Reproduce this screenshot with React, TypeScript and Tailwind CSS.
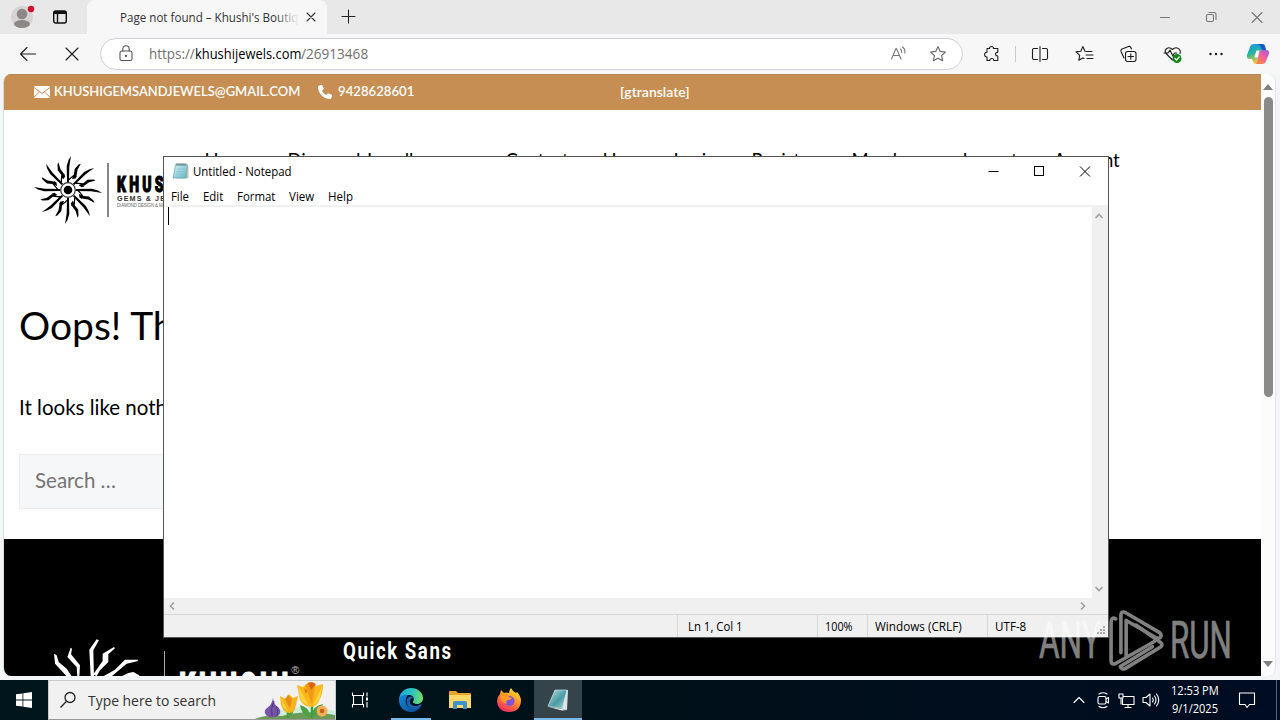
import { useLayoutEffect, useRef, useState, type ReactNode } from "react";

const SEGOE = "font-['Open_Sans','Noto_Sans',sans-serif]";
const LATO = "font-['Lato','Open_Sans',sans-serif]";

/** Single-line text squeezed or stretched horizontally to a given width. */
function Fit({ w, className = "", children }: { w: number; className?: string; children: ReactNode }) {
  const ref = useRef<HTMLSpanElement>(null);
  const [scale, setScale] = useState(1);
  useLayoutEffect(() => {
    if (ref.current) setScale(w / ref.current.offsetWidth);
  }, [w]);
  return (
    <span className="flex shrink-0 whitespace-nowrap" style={{ width: w }}>
      <span ref={ref} className={`shrink-0 origin-left ${className}`} style={{ transform: `scaleX(${scale})` }}>
        {children}
      </span>
    </span>
  );
}

function Icon({ children, className = "size-5", box = "0 0 20 20" }: { children: ReactNode; className?: string; box?: string }) {
  return (
    <svg viewBox={box} className={`shrink-0 ${className}`} fill="none" stroke="currentColor" strokeWidth="1.1" strokeLinecap="round" strokeLinejoin="round">
      {children}
    </svg>
  );
}

function TabBar() {
  return (
    <div className="flex h-[34px] bg-[#e8e8e8]">
      <div className="flex w-[87px] items-center rounded-br-lg pl-[10px]">
        <svg viewBox="0 0 26 26" className="size-[26px]">
          <circle cx="12" cy="13" r="11" fill="#d6d4d2" />
          <circle cx="12" cy="10" r="5.3" fill="#8b8885" />
          <ellipse cx="12" cy="20" rx="8" ry="4" fill="#8b8885" />
          <circle cx="21" cy="5" r="3.2" fill="#d00f2c" />
        </svg>
        <svg viewBox="0 0 16 16" className="ml-4 size-4" fill="none" stroke="#111" strokeWidth="1.4">
          <rect x="1.7" y="2" width="12.6" height="12" rx="2" />
          <path d="M2 3.500h12" strokeWidth="3" />
          <path d="M5.500 4v10" />
        </svg>
      </div>
      <div className="flex w-[240px] items-center rounded-t-lg bg-[#f7f7f7] pl-[33px]">
        <div className="relative mt-px w-[179px] overflow-hidden text-[#333]">
          <Fit w={178} className={`${SEGOE} text-[12px] leading-[18px]`}>Page not found – Khushi's Boutiq</Fit>
          <div className="absolute inset-y-0 right-0 w-6 bg-linear-to-r from-transparent to-[#f7f7f7]" />
        </div>
        <Icon className="ml-[5px] size-[14px]" box="0 0 14 14"><path d="M3 3l8 8M11 3l-8 8" stroke="#333" /></Icon>
      </div>
      <Icon className="mt-[8px] ml-[13px] size-4 text-[#222]" box="0 0 16 16"><path d="M8.500 2v13M2 8.500h13" /></Icon>
      <div className="ml-auto flex items-center gap-[30px] pr-[15px] text-[#777]">
        <Icon className="size-4" box="0 0 16 16"><path d="M3.500 8.500h9" /></Icon>
        <Icon className="size-4" box="0 0 16 16"><rect x="3.500" y="5.500" width="7" height="7" rx="1.500" /><path d="M6 3.500h5q2 0 2 2v5" /></Icon>
        <Icon className="size-4" box="0 0 16 16"><path d="M3 3.500l10 10M13 3.500l-10 10" /></Icon>
      </div>
    </div>
  );
}

const STAR = "M10 2.600l2.200 4.800 5.200.6-3.800 3.600 1 5.200L10 14.200l-4.600 2.600 1-5.200L2.600 8l5.200-.6z";

function Toolbar() {
  return (
    <div className="flex h-10 items-center bg-[#f7f7f7] text-[#1c1c1c]">
      <Icon className="ml-[18px] size-5"><path d="M17.500 10h-15M9 3.500L2.500 10 9 16.500" /></Icon>
      <Icon className="ml-6 size-5"><path d="M4 4l12 12M16 4L4 16" /></Icon>
      <div className="ml-[18px] flex h-8 w-[863px] items-center rounded-full border border-[#cfcfdc] bg-white pl-[15px]">
        <Icon className="size-5 text-[#555]">
          <rect x="4" y="7" width="12" height="9.500" rx="1.800" />
          <path d="M6.800 7V5a3.200 3.200 0 016.400 0v2" />
          <circle cx="10" cy="12" r=".6" fill="currentColor" />
        </Icon>
        <div className={`ml-[13px] flex text-[14px] leading-5 text-[#707070] ${SEGOE}`}>
          <Fit w={46}>https://</Fit>
          <Fit w={106} className="text-black">khushijewels.com</Fit>
          <Fit w={67}>/26913468</Fit>
        </div>
        <Icon className="ml-[520px] size-5 text-[#777]">
          <path d="M3.500 15L8 4.500h.4L13 15M5 11.500h6.500M12.500 5q1.600 1.200 1.200 3.600M14.500 3q3 2.300 2.300 6" />
        </Icon>
        <Icon className="ml-5 size-5 text-[#666]"><path d={STAR} /></Icon>
      </div>
      <Icon className="ml-[19px] size-5">
        <path d="M7.500 4.500a2 2 0 014 0h4.300V8a.5.500 0 01-.6.400 1.700 1.700 0 100 3.400.5.500 0 01.6.400v4.300h-4a2 2 0 00-4 0H5V13a2.400 2.400 0 110-4.800V4.500z" />
      </Icon>
      <div className="ml-[13px] h-4 w-px bg-[#ccc]" />
      <Icon className="ml-[15px] size-[18px]" box="0 0 18 18"><path d="M6.500 3.500H3q-1.500 0-1.500 1.500v8q0 1.500 1.500 1.500h3.500M11.500 3.500H15q1.500 0 1.500 1.500v8q0 1.500-1.500 1.500h-3.500M9 1.500v15" /></Icon>
      <Icon className="ml-[26px] size-5"><path d="M13 7.500l-3-.3-2.200-4.600-2 4.600-4.800.7 3.700 3.400-.9 5 4.200-2.400 1 .5M13 7.500h4M11 11h7M12 14.500h6" /></Icon>
      <Icon className="ml-6 size-5"><rect x="6.500" y="7.500" width="10.500" height="10" rx="2.200" /><path d="M11.800 9.800v5.400M9 12.500h5.500M5 14L2 7.500q-.6-1.800 1-2.500L9.500 2.500q1.600-.5 2.300 1l.7 1.500" /></Icon>
      <Icon className="ml-6 size-5">
        <path d="M9.500 16L3 9.500C.500 5.500 5.500 1.500 9.500 5.500c4-4 9 0 7.500 4M1 9h4l2-3 2.800 6 1.700-3h2" />
        <circle cx="14" cy="14.500" r="4.500" fill="#10861a" stroke="none" />
        <path d="M12 14.500l1.500 1.500 2.700-3" stroke="#fff" strokeWidth="1.300" />
      </Icon>
      <Icon className="ml-[23px] size-5"><path d="M4.500 10h.01M10 10h.01M15.500 10h.01" strokeWidth="2.400" /></Icon>
      <svg viewBox="0 0 24 22" className="ml-[20px] h-[22px] w-6">
        <defs>
          <linearGradient id="cpA" x1="0" y1="0" x2="0.300" y2="1"><stop stopColor="#1a8fec" /><stop offset=".5" stopColor="#26b6a0" /><stop offset="1" stopColor="#f5c72a" /></linearGradient>
          <linearGradient id="cpB" x1="1" y1="0" x2="0.200" y2="1"><stop stopColor="#a05be8" /><stop offset=".5" stopColor="#f0609a" /><stop offset="1" stopColor="#ff8a3c" /></linearGradient>
        </defs>
        <path d="M8 1h8q2.500 0 3.200 3L20 7h-4q-2 0-2.700 2.500L11 18q-.8 2.500-3 2.500L6 16H4q-4 0-3-4L4 4q1-3 4-3z" fill="url(#cpA)" />
        <path d="M11 1h5q2.500 0 3.200 3L20 7h-4l-1.500-3.500Q14 1.500 11 1z" fill="#1657d0" />
        <path d="M16 21H8q2.200 0 3-2.500L13.300 9.500Q14 7 16 7h4q4 0 3 4l-3 7q-1 3-4 3z" fill="url(#cpB)" />
        <path d="M10.500 7.500h3l-1.800 7H9q-.8 0-.5-1z" fill="#fff" />
      </svg>
    </div>
  );
}

const ANGLES = [0, 45, 90, 135, 180, 225, 270, 315];

function SunLogo() {
  return (
    <svg viewBox="-35 -35 70 70" className="size-[70px] shrink-0">
      {ANGLES.map((a) => (
        <g key={a} transform={`rotate(${a})`}>
          <path d="M-1-8l-.3-16L.500-30 3-34 2-28l-.7 5-.3 15z" />
          <path d="M.500-11L6-15.500l.6-5.500 4-4.500 2.200-.8-3.300 6L8.500-14 4.500-13 1-9.500z" />
          <path d="M5-14l4 0-1.500 2.500L4-11z" />
        </g>
      ))}
      <circle r="7.300" fill="#fff" stroke="#333" strokeWidth="1.200" />
      <circle r="4.300" />
    </svg>
  );
}

const NAV: [string, string][] = [
  ["Home", "w-[83px]"],
  ["Diamond Jewellery", "w-[218px]"],
  ["Contact", "w-[97px]"],
  ["Home", "w-[71px]"],
  ["Login", "w-[78px]"],
  ["Register", "w-[100px]"],
  ["Members", "w-[111px]"],
  ["Logout", "w-[91px]"],
  ["Account", "w-[80px]"],
];

function WebPage() {
  return (
    <div className="flex h-[606px] bg-[#f4f5f6] pb-1 pl-[3px]">
      <div className={`flex w-[1258px] flex-col overflow-hidden rounded-l-lg border-l border-[#dadada] bg-white text-black ${LATO}`}>
        <div className="flex h-9 shrink-0 items-center border-t border-[#b48a5c] bg-[#c68e52] pb-px pl-[30px] text-[13px] font-semibold text-white">
          <svg viewBox="0 0 16 12" className="h-3 w-4"><rect width="16" height="12" rx="1" fill="#fff" /><path d="M0 1.500l8 6 8-6M0 11l5.500-5M16 11l-5.500-5" fill="none" stroke="#c68e52" /></svg>
          <div className="ml-1"><Fit w={246}>KHUSHIGEMSANDJEWELS@GMAIL.COM</Fit></div>
          <svg viewBox="0 0 512 512" className="ml-[17.500px] size-[14px]" fill="#fff"><path d="M164.900 24.600c-7.700-18.600-28-28.500-47.400-23.200l-88 24C12.100 30.200 0 46 0 64c0 247.400 200.600 448 448 448 18 0 33.800-12.100 38.600-29.500l24-88c5.300-19.400-4.600-39.700-23.200-47.400l-96-40c-16.300-6.800-35.200-2.100-46.300 11.600L304.700 368C234.300 334.700 177.300 277.700 144 207.300l49.300-40.300c13.700-11.200 18.400-30 11.600-46.300l-40-96z" /></svg>
          <div className="ml-[6.500px]"><Fit w={76}>9428628601</Fit></div>
          <div className="mt-0.5 ml-[206px]"><Fit w={70}>[gtranslate]</Fit></div>
        </div>
        <div className="flex h-[160px] shrink-0">
          <div className="flex w-[200.500px] items-center pl-[29px]">
            <SunLogo />
            <div className="ml-1 h-[54px] w-[1.500px] bg-[#888]" />
            <div className="ml-[8px] flex w-[70px] flex-col pt-1">
              <Fit w={70} className="text-[22px] leading-[18px] font-black tracking-[5px] [-webkit-text-stroke:1.2px_black] font-['Roboto']">KHUSHI</Fit>
              <Fit w={74} className="mt-[2px] text-[6.500px] leading-[6px] font-bold tracking-[1px] font-['Liberation_Sans'] text-[#333]">GEMS &amp; JEWELS</Fit>
              <Fit w={74} className="text-[5px] leading-[6px] tracking-tight font-['Liberation_Sans'] text-[#666]">DIAMOND DESIGN &amp; MANUFACTURE</Fit>
            </div>
          </div>
          <nav className="flex pt-[36px] text-[18.500px] leading-7 tracking-[-0.01em]">
            {NAV.map(([label, width], i) => (
              <span key={i} className={`${width} shrink-0 whitespace-nowrap`}>{label}</span>
            ))}
          </nav>
        </div>
        <div className="flex h-[269px] shrink-0 flex-col items-start pl-[15px]">
          <h1 className="mt-[31px] text-[39px] leading-[48px] whitespace-nowrap">Oops! That page can’t be found.</h1>
          <p className="mt-[42px] text-[20.500px] leading-8 whitespace-nowrap">It looks like nothing was found at this location.</p>
          <div className="mt-[31px] flex h-[55px] w-[420px] shrink-0 items-center border border-[#ededed] bg-[#f5f7f9] pb-0.5 pl-[15px] text-[20.500px] text-[#757575]">Search …</div>
        </div>
        <div className="flex h-[137px] shrink-0 items-end bg-black">
          <svg viewBox="150 50 310 118" className="ml-[46px] h-[39.300px] w-[103.300px] shrink-0" fill="#fff">
            <path d="M290 57l7 3-17 30 2 78h-10l-4-80z" />
            <path d="M342 80l3 4-20 18v23l-25 25-10 18-10-6 28-40v-22z" />
            <path d="M212 82l4 3-3 17 27 33-2 33h-6l-2-28-28-30z" />
            <path d="M162 100l8 5 6 20 24 20 15 23h-15l-35-38z" />
            <path d="M375 118h40l-3 5-32 7-45 38h-25l35-20z" />
            <path d="M400 155l18 10v3h-53l20-10z" />
          </svg>
          <div className="ml-[10.500px] h-[25px] w-[1.500px] bg-[#aaa]" />
          <div className="ml-[14px] flex h-3 w-[124px] items-start text-white">
            <div className="h-3 overflow-hidden pt-[4px]"><Fit w={113} className="text-[42px] leading-[40px] font-black tracking-[5px] [-webkit-text-stroke:1px_white] font-['Roboto']">KHUSHI</Fit></div>
            <span className="-ml-px text-[11px] leading-3 text-[#bbb] font-['Liberation_Sans']">®</span>
          </div>
          <div className="mb-[10px] ml-[40px] text-[24px] leading-[30px] font-bold text-white font-['Roboto']"><Fit w={109.500} className="tracking-[2px]">Quick Sans</Fit></div>
        </div>
      </div>
      <div className="flex w-[15px] flex-col items-center rounded-r-lg border-r border-[#e4e4e4] bg-[#fcfcfc]">
        <svg viewBox="0 0 10 6" className="mt-[10px] h-[6px] w-[10px]" fill="#808080"><path d="M5 0l5 6H0z" /></svg>
        <div className="mt-[7px] h-[300px] w-[9px] rounded-full bg-[#8a8a8a]" />
        <svg viewBox="0 0 10 6" className="mt-auto mb-[9px] h-[6px] w-[10px]" fill="#808080"><path d="M5 6l5-6H0z" /></svg>
      </div>
    </div>
  );
}

function NotepadIcon() {
  return (
    <svg viewBox="0 0 18 18" className="size-[18px] shrink-0">
      <defs><linearGradient id="pad" x1="0" y1="0" x2="1" y2="1"><stop stopColor="#d5f1f6" /><stop offset="1" stopColor="#62b5c8" /></linearGradient></defs>
      <path d="M14 2.500l2 .5v12H4z" fill="#d9d0a8" stroke="#a4a59b" strokeWidth=".6" />
      <path d="M3.500 1.500h11.800L14 15H1z" fill="url(#pad)" stroke="#5c98a7" strokeWidth=".6" />
      <path d="M5 6h8M4.500 8.500h8M4 11h8" stroke="#83c6d3" strokeWidth=".7" />
      <path d="M5 0v3M7 0v3M9 0v3M11 0v3M13 0v3" stroke="#4b6068" strokeWidth=".8" />
    </svg>
  );
}

function Chevron({ d }: { d: string }) {
  return <svg viewBox="0 0 8 8" className="size-2 shrink-0" fill="none" stroke="#a3a3a3" strokeWidth="1.700"><path d={d} /></svg>;
}

function Notepad() {
  return (
    <div className={`absolute top-[156px] left-[163px] flex h-[482px] w-[946px] flex-col border border-[#555] bg-white text-[12px] text-black ${SEGOE}`}>
      <div className="flex h-[29px] shrink-0 items-center pl-[8px]">
        <NotepadIcon />
        <div className="ml-[3px]"><Fit w={99}>Untitled - Notepad</Fit></div>
        <div className="mb-px ml-auto flex gap-[34px] pr-[17px]">
          <svg viewBox="0 0 12 12" className="size-3" stroke="#000" fill="none"><path d="M1.500 6.500h10" /></svg>
          <svg viewBox="0 0 12 12" className="size-3" stroke="#000" fill="none"><rect x="1.500" y="1.500" width="9" height="9" /></svg>
          <svg viewBox="0 0 12 12" className="size-3" stroke="#000" fill="none"><path d="M1 1.500l10 10M11 1.500L1 11.500" /></svg>
        </div>
      </div>
      <div className="flex h-[21px] shrink-0 items-start gap-[14px] border-b-2 border-[#f0f0f0] pl-[7px] leading-[22px]">
        <Fit w={18}>File</Fit><Fit w={20}>Edit</Fit><Fit w={38}>Format</Fit><Fit w={25}>View</Fit><Fit w={25}>Help</Fit>
      </div>
      <div className="flex h-[391px] shrink-0">
        <div className="flex-1 pl-1"><div className="h-[18px] w-px bg-black" /></div>
        <div className="flex w-4 flex-col items-center justify-between bg-[#f0f0f0] py-[5px] pr-0.5">
          <Chevron d="M.500 6L4 2.500 7.500 6" />
          <Chevron d="M.500 2L4 5.500 7.500 2" />
        </div>
      </div>
      <div className="flex h-4 shrink-0 items-center justify-between bg-[#f0f0f0] pr-[21px] pl-1">
        <Chevron d="M6 .500L2.500 4 6 7.500" />
        <Chevron d="M2 .500L5.500 4 2 7.500" />
      </div>
      <div className="flex flex-1 items-stretch border-t border-[#d7d7d7] bg-[#f0f0f0] pl-[513px] leading-[24px]">
        <div className="h-[22px] w-[140px] border-l border-[#d7d7d7] pl-[10px]"><Fit w={55}>Ln 1, Col 1</Fit></div>
        <div className="h-[22px] w-[50px] border-l border-[#d7d7d7] pl-[7px]"><Fit w={28}>100%</Fit></div>
        <div className="h-[22px] w-[120px] border-l border-[#d7d7d7] pl-[7px]"><Fit w={87}>Windows (CRLF)</Fit></div>
        <div className="h-[22px] w-[108px] border-l border-[#d7d7d7] pl-[7px]"><Fit w={31}>UTF-8</Fit></div>
        <svg viewBox="0 0 12 12" className="mt-auto size-3" fill="#aaa"><path d="M8 1h2v2H8zM5 4h2v2H5zM8 4h2v2H8zM2 7h2v2H2zM5 7h2v2H5zM8 7h2v2H8z" /></svg>
      </div>
    </div>
  );
}

function Watermark() {
  return (
    <div className="absolute top-[609px] left-[1039px] flex h-[63px] w-[194px] items-center text-[52px] leading-[65px] font-normal text-white opacity-50 font-['Roboto']">
      <Fit w={62} className="[-webkit-text-stroke:0.6px_white]">ANY</Fit>
      <svg viewBox="385 55 170 192" className="ml-[7px] h-[63px] w-[56px] shrink-0" fill="none" stroke="#fff" strokeWidth="11" strokeLinejoin="round" strokeLinecap="round">
        <path d="M408 85q-13-7-14 10v118q0 14 14 8l118-67" />
        <path d="M424 188V73q0-12 12-8l106 62q8 8 2 15-6 4-14 0l-90-52v108" />
        <path d="M470 104l76 54q6 6 0 12l-108 66q-12 6-16-6l98-60" />
      </svg>
      <div className="ml-[6px]"><Fit w={62} className="[-webkit-text-stroke:0.6px_white]">RUN</Fit></div>
    </div>
  );
}

function Crocuses() {
  return (
    <svg viewBox="0 0 80 38" className="h-[38px] w-20 shrink-0">
      <path d="M20 29q30-6 60 1v8H20z" fill="#cbeedd" />
      <path d="M0 38q10-5 27-3 25-7 53-1v4z" fill="#6c9a57" />
      <path d="M33 37V23M57 37V20" stroke="#3e9b3d" strokeWidth="2.500" />
      <path d="M57 35q0-10 11-12-2 9-11 14zM55 35q-1-9-10-11 1 9 10 13zM32 36q1-8 7-9 0 6-6 10z" fill="#4da044" />
      <g transform="translate(3 0)">
        <path d="M15 17q1 7 5 9 4 4 1 8-7 5-13 0-3-4 1-7 5-3 6-10z" fill="#7653a3" />
        <path d="M16 20q-4 8-2 15M18 25q3 4 1 10" stroke="#503680" fill="none" />
      </g>
      <path d="M25 15l6 3 3-5 4 4 5-2-2 9q-1 8-7 8-6-1-8-8z" fill="#f6b51c" />
      <path d="M30 18l3-4 4 4-2 10z" fill="#ed8b17" /><path d="M26 16l7 14-5-4z" fill="#ffd03c" />
      <path d="M42 4l6 2 6-5 7 4 7-2q0 9-3 15-3 8-9 8-7 0-11-7z" fill="#f9b91d" />
      <path d="M50 4l5-3 5 4-3 19z" fill="#f09a16" /><path d="M53 2l3 7 5-6-4-2zM49 7l3 3-1 3z" fill="#dd6414" />
      <path d="M43 5l11 20-8-5zM67 5L58 25l7-7z" fill="#ffd342" />
      <circle cx="67" cy="30" r="5.500" fill="#f4ae53" /><circle cx="67" cy="30" r="2.300" fill="#c95f19" />
    </svg>
  );
}

function Taskbar() {
  return (
    <div className={`flex h-10 bg-linear-to-r from-[#00161d] via-[#001018] to-[#000c22] text-white ${SEGOE}`}>
      <div className="flex w-12 items-center justify-center">
        <svg viewBox="0 0 16 16" className="size-4" fill="#fff"><path d="M0 2.300l6.500-.9v6.200H0zM7.300 1.300L16 0v7.600H7.300zM0 8.400h6.500v6.200L0 13.700zM7.300 8.400H16V16l-8.700-1.200z" /></svg>
      </div>
      <div className="flex w-[288px] items-center border border-[#c9c9c9] border-b-[#999] bg-[#f1f1f1] text-[#333]">
        <svg viewBox="0 0 18 18" className="ml-[10px] size-[18px]" fill="none" stroke="#222" strokeWidth="1.300"><circle cx="11" cy="6.500" r="5" /><path d="M7.500 10.300L1.500 16.500" /></svg>
        <div className="ml-[11px]"><Fit w={128} className="text-[15px] leading-6">Type here to search</Fit></div>
        <div className="ml-auto"><Crocuses /></div>
      </div>
      <div className="flex w-12 items-center justify-center">
        <svg viewBox="0 0 18 18" className="size-[18px]" fill="none" stroke="#fff" strokeWidth="1.100"><path d="M1.500 4V1.500M12.500 4V1.500M1.500 14v2.500M12.500 14v2.500M1 4.500h12M1 13.500h12M2.500 4.500v9M11.500 4.500v9M16 1.500v4M16 11v5.500" /><path d="M15 6.500h2v3h-2z" fill="#fff" stroke="none" /></svg>
      </div>
      <div className="ml-[7px] flex w-10 items-center justify-center border-b-2 border-[#77b9ec] pt-0.5">
        <svg viewBox="0 0 24 24" className="size-6">
          <defs>
            <linearGradient id="eg" x1="0" y1=".3" x2="1" y2=".4"><stop stopColor="#1ba6e0" /><stop offset=".55" stopColor="#2cc5c1" /><stop offset="1" stopColor="#70df63" /></linearGradient>
            <linearGradient id="eb" x1="0" y1="0" x2="1" y2="1"><stop stopColor="#128bd8" /><stop offset="1" stopColor="#0c4592" /></linearGradient>
          </defs>
          <path d="M0 11C1 4 6 0 12 0c7 0 12 5 12 10 0 4-3 6-6 6s-5-1-4-3c2-4-1-6-4-6C6 7 1 9 0 12z" fill="url(#eg)" />
          <path d="M0 12c0-3 4-6 9-5-4 4-3 13 5 14 3 0 6-1 8-3-2 4-6 6-10 6C5 24 0 19 0 12z" fill="url(#eb)" />
          <path d="M8 11c2-3 5-3 6-2-5 4 1 10 9 7-2 4-6 6-10 5-4-1-6-5-5-10z" fill="#1b61ad" />
          <path d="M14 13c-1 2 1 3 4 3 1 0 3 0 4-1-2 3-6 4-9 2-3-2-3-6 1-7 1 1 1 2 0 3z" fill="#001018" />
        </svg>
      </div>
      <div className="ml-[5px] flex w-12 items-center justify-center">
        <svg viewBox="0 0 22 20" className="h-5 w-[22px]"><path d="M0 2q0-1 1-1h6l2 2h12q1 0 1 1v14H0z" fill="#e9a52b" /><path d="M0 5h22v13H0z" fill="#ffd868" /><path d="M4 19v-6q0-2 2-2h10q2 0 2 2v6h-4v-4H8v4z" fill="#3e91cb" /></svg>
      </div>
      <div className="ml-px flex w-12 items-center justify-center">
        <svg viewBox="0 0 24 24" className="size-6">
          <defs><linearGradient id="ff" x1=".8" y1="0" x2=".25" y2="1"><stop stopColor="#ffe52e" /><stop offset=".45" stopColor="#ff912a" /><stop offset="1" stopColor="#f22264" /></linearGradient></defs>
          <path d="M3 6l1-4 3 3q2-1 5 0Q12 2 14 0q2 4 5 5l1-1q4 4 4 9-1 11-12 11T0 13q0-4 3-7z" fill="url(#ff)" />
          <circle cx="12.500" cy="13" r="5" fill="#8151dc" />
          <path d="M4 7q5-2 8 2l3 1q-1 2-4 2-3 1-1 4-5-1-6-5z" fill="#ff9b24" />
        </svg>
      </div>
      <div className="ml-px flex w-12 items-center justify-center border-b-2 border-[#77b9ec] bg-[#35434a] pt-0.5">
        <svg viewBox="0 0 24 24" className="size-6">
          <defs><linearGradient id="np" x1="0" y1="0" x2="1" y2="1"><stop stopColor="#b9e6e9" /><stop offset=".55" stopColor="#4b9aa3" /><stop offset="1" stopColor="#a7d5da" /></linearGradient></defs>
          <path d="M20 2h2l-1 20-5-1z" fill="#dfe5e7" />
          <path d="M9 2h12l-5 18.500L2 18z" fill="url(#np)" stroke="#c1e3e5" strokeWidth=".7" />
          <path d="M1 18.500L16 21l5 1-5 .5z" fill="#eef4f3" />
        </svg>
      </div>
      <div className="ml-auto flex items-center">
        <Icon className="size-3" box="0 0 12 12"><path d="M1 8.500l5-5 5 5" /></Icon>
        <Icon className="ml-[9px] size-[18px]" box="0 0 18 18"><rect x="4" y="5.500" width="8" height="7.500" rx="1.500" /><path d="M12 8l2.500-1.500v5.500L12 10.500M5 3q4-2.500 8 0M5 15.500q4 2.500 8 0" /></Icon>
        <Icon className="ml-[6px] size-[17px]" box="0 0 17 17"><path d="M6 4.500h10v8H4.500V7M7 15.500h6M10 12.500v3M1 2h4v4H1zM3 6v6" /></Icon>
        <Icon className="ml-[7px] size-[18px]" box="0 0 18 18"><path d="M1 6.500h3L8 3v12l-4-3.500H1zM10.500 7q1.500 2 0 4M12.500 5q3 4 0 8M14.500 3q4.500 6 0 12" /></Icon>
        <div className="ml-[10px] flex w-[50px] flex-col items-center text-[12px] leading-[18px]">
          <Fit w={48}>12:53 PM</Fit>
          <Fit w={46}>9/1/2025</Fit>
        </div>
        <Icon className="mr-[20px] ml-[18px] size-[18px]" box="0 0 18 18"><path d="M1.500 2h15v11.500h-5L9 16.500 7 13.500H1.500z" /></Icon>
        <div className="mr-[3px] h-10 w-px bg-[#59616d]" />
      </div>
    </div>
  );
}

export default function App() {
  return (
    <div className="relative flex h-[720px] w-[1280px] flex-col overflow-hidden bg-[#f7f7f7]">
      <TabBar />
      <Toolbar />
      <WebPage />
      <Taskbar />
      <Notepad />
      <Watermark />
    </div>
  );
}
